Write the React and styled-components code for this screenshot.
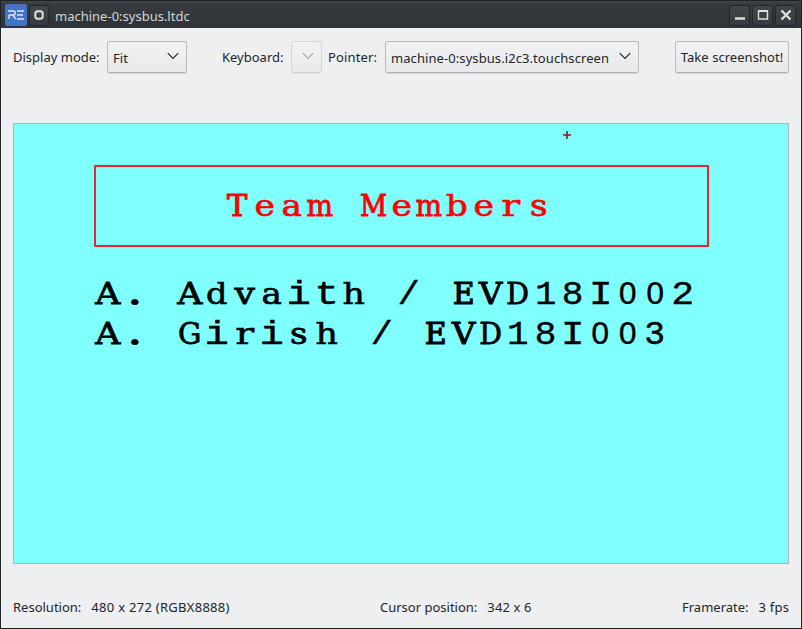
import React from "react";
import styled, { createGlobalStyle } from "styled-components";

const GlobalStyle = createGlobalStyle`
  * { box-sizing: border-box; }
  html, body { margin: 0; padding: 0; overflow: hidden; }
`;

const Window = styled.div`
  width: 802px;
  height: 629px;
  display: flex;
  flex-direction: column;
  background: #eeeff1;
  border: 1px solid #1e2125;
  border-top: 0;
  color: #232629;
  font: 13px/18px "Noto Sans", sans-serif;
  white-space: nowrap;
`;

const TitleBar = styled.header`
  height: 28px;
  flex: none;
  display: flex;
  align-items: center;
  gap: 2px;
  padding: 2px 5px 0 4px;
  background: linear-gradient(#1d2024 0, #1d2024 1px, #42464b 1px, #373b40 4px, #2f3338 100%);
`;

const Title = styled.h1`
  flex: 1;
  margin: 0 0 0 4px;
  padding-top: 1px;
  font-size: 13px;
  line-height: 18px;
  font-weight: 400;
  color: #d3d5d6;
`;

const AppIcon = styled.svg`
  width: 22px;
  height: 22px;
  flex: none;
`;

const TitleButton = styled.button`
  width: ${(p) => (p.$small ? 20 : 21)}px;
  height: 21px;
  padding: 0;
  border: 1px solid #24272b;
  border-radius: 3px;
  background: linear-gradient(#42464a, #373b40);
  display: grid;
  place-items: center;
`;

const WindowControls = styled.div`
  display: flex;
  gap: 2px;
`;

const Toolbar = styled.div`
  height: 32px;
  margin: 13px 12px 0;
  flex: none;
  display: flex;
  align-items: center;
`;

const Label = styled.label`
  width: ${(p) => p.$width}px;
  margin-left: ${(p) => p.$gap || 0}px;
  flex: none;
  letter-spacing: ${(p) => p.$spacing || 0}px;
`;

const Control = styled.button`
  width: ${(p) => p.$width}px;
  height: 32px;
  margin-left: ${(p) => p.$push || 0};
  padding: ${(p) => (p.$plain ? "0" : "2px 7px 0 5px")};
  display: flex;
  flex: none;
  align-items: center;
  justify-content: ${(p) => (p.$plain ? "center" : "space-between")};
  border: 1px solid ${(p) => (p.$disabled ? "#d4d5d7" : "#b9bbbd")};
  border-bottom-color: ${(p) => (p.$disabled ? "#cccdcf" : "#adafb1")};
  border-radius: 3px;
  background: linear-gradient(#f1f2f3, #e8e9ea);
  box-shadow: 0 1px 0 ${(p) => (p.$disabled ? "#e3e4e6" : "#d5d6d8")};
  color: ${(p) => (p.$disabled ? "#aaacae" : "#232629")};
  font: inherit;
  letter-spacing: ${(p) => (p.$plain ? 0.04 : 0.08)}px;
`;

const Arrow = styled.svg`
  width: 12px;
  height: 8px;
  margin: 0 0 4px auto;
  fill: none;
  stroke: currentColor;
  stroke-width: 1.2;
`;

const Screen = styled.main`
  width: 776px;
  height: 441px;
  margin: 50px 12px 0;
  flex: none;
  border: 1px solid #b1b3b4;
  background: #80ffff;
  display: flex;
  flex-direction: column;
`;

const CursorRow = styled.div`
  height: 41px;
  padding: 6px 0 0 547.5px;
`;

const Crosshair = styled.svg`
  display: block;
  width: 10px;
  height: 10px;
`;

const Banner = styled.section`
  width: 615px;
  height: 82px;
  margin-left: 80px;
  padding: 20px 0 0 127.4px;
  border: 2px solid #e42835;
  border-radius: 1px;
  color: #ff0000;
`;

const Members = styled.section`
  padding: 28px 0 0 79.6px;
  color: #000;
`;

const Line = styled.div`
  height: 40px;
  display: flex;
`;

const faces = {
  serif: '30.5px/40px "DejaVu Serif", serif',
  sans: '30.5px/40px "DejaVu Sans", sans-serif',
  mono: '34px/40px "Liberation Mono", monospace',
};

const Cell = styled.span`
  width: 27.4px;
  height: 40px;
  flex: none;
  display: flex;
  justify-content: center;
  white-space: pre;
  font: ${(p) => faces[p.$face]};
  transform: translateY(${(p) => (p.$face === "mono" ? 0 : -1)}px) scaleX(${(p) => p.$stretch});
  -webkit-text-stroke: ${(p) => p.$stroke}px currentColor;
`;

const glyphs = {
  A: ["serif", 1.14], T: ["serif", 1, 1.1], M: ["serif", 0.87, 1], E: ["serif", 0.98, 1.2],
  V: ["serif", 1.06, 1], D: ["serif", 0.93], G: ["serif", 0.96],
  e: ["serif", 1.13, 0.7], a: ["serif", 1.12, 0.7], m: ["serif", 0.92], b: ["serif", 1.13, 0.6],
  r: ["serif", 1.3, 0.5], s: ["serif", 1.12, 0.8], d: ["serif", 1.1, 0.6], v: ["serif", 1.18],
  h: ["serif", 1.14, 0.6], i: ["mono", 1.2], t: ["mono", 1.2], I: ["mono", 1.15],
  0: ["sans", 1], 1: ["mono", 1.05], 8: ["mono", 1.06], 2: ["mono", 1.12], 3: ["mono", 1.02],
  "/": ["mono", 1.1], ".": ["serif", 1.25, 2],
};

const strokes = { serif: 0.8, sans: 0.2, mono: 0.4 };

function DisplayText({ text }) {
  return (
    <Line>
      {[...text].map((char, index) => {
        const [face, stretch, stroke = strokes[face]] = glyphs[char] || ["mono", 1];
        return <Cell key={index} $face={face} $stretch={stretch} $stroke={stroke}>{char}</Cell>;
      })}
    </Line>
  );
}

const StatusBar = styled.footer`
  height: 18px;
  margin: 34px 12px 0;
  display: grid;
  grid-template-columns: 367px 302px 1fr;
`;

const Status = styled.div`
  display: flex;
  gap: 10px;
`;

const StatusValue = styled.span`
  letter-spacing: ${(p) => p.$spacing || 0.1}px;
`;

const Chevron = () => (
  <Arrow viewBox="0 0 12 8"><path d="M.8 1.2 6 6.4l5.2-5.2" /></Arrow>
);

export default function App() {
  return (
    <>
      <GlobalStyle />
      <Window>
        <TitleBar>
          <AppIcon viewBox="0 0 22 22">
            <rect width="22" height="22" rx="2" fill="#4473c5" />
            <path d="M3 7h5.2q2 0 2 2t-2 2H4m4 0 2.7 4M4 11v4M12 7h7M12 11h6M12 15h7" fill="none" stroke="#e0e9f7" strokeWidth="1.4" />
          </AppIcon>
          <TitleButton $small>
            <svg width="12" height="12" viewBox="0 0 12 12"><path d="M4 2.3h4l1.700 1.700v4L8 9.700H4L2.300 8V4z" fill="none" stroke="#e0e0df" strokeWidth="2" /><path d="M1.500 1.500h2v2h-2zm7 0h2v2h-2zm-7 7h2v2h-2zm7 0h2v2h-2z" fill="#e0e0df" opacity=".25" /></svg>
          </TitleButton>
          <Title>machine-0:sysbus.ltdc</Title>
          <WindowControls>
            <TitleButton><svg width="12" height="12"><path d="M1 9.5h10" stroke="#e0e0dc" strokeWidth="2.5" /></svg></TitleButton>
            <TitleButton><svg width="12" height="12"><path d="M1.5 2h9v8h-9z" fill="none" stroke="#e0e0dc" strokeWidth="1.4" /><path d="M1 2h10" stroke="#e0e0dc" strokeWidth="2" /></svg></TitleButton>
            <TitleButton><svg width="12" height="12"><path d="m1.5 1.5 9 9m0-9-9 9" stroke="#e0e0dc" strokeWidth="2.3" /></svg></TitleButton>
          </WindowControls>
        </TitleBar>
        <Toolbar>
          <Label $width={94}>Display mode:</Label>
          <Control $width={80}>Fit<Chevron /></Control>
          <Label $width={69} $gap={35}>Keyboard:</Label>
          <Control $width={31} $disabled><Chevron /></Control>
          <Label $width={57} $gap={6} $spacing={0.15}>Pointer:</Label>
          <Control $width={254}>machine-0:sysbus.i2c3.touchscreen<Chevron /></Control>
          <Control $width={114} $plain $push="auto">Take screenshot!</Control>
        </Toolbar>
        <Screen>
          <CursorRow>
            <Crosshair viewBox="0 0 10 10"><path d="M1 5h8M5 1v8" stroke="#821f24" strokeWidth="1.6" /></Crosshair>
          </CursorRow>
          <Banner><DisplayText text="Team Members" /></Banner>
          <Members>
            <DisplayText text="A. Advaith / EVD18I002" />
            <DisplayText text="A. Girish / EVD18I003" />
          </Members>
        </Screen>
        <StatusBar>
          <Status><span>Resolution:</span><StatusValue $spacing={0.28}>480 x 272 (RGBX8888)</StatusValue></Status>
          <Status><span>Cursor position:</span><StatusValue>342 x 6</StatusValue></Status>
          <Status><span>Framerate:</span><StatusValue $spacing={0.2}>3 fps</StatusValue></Status>
        </StatusBar>
      </Window>
    </>
  );
}
